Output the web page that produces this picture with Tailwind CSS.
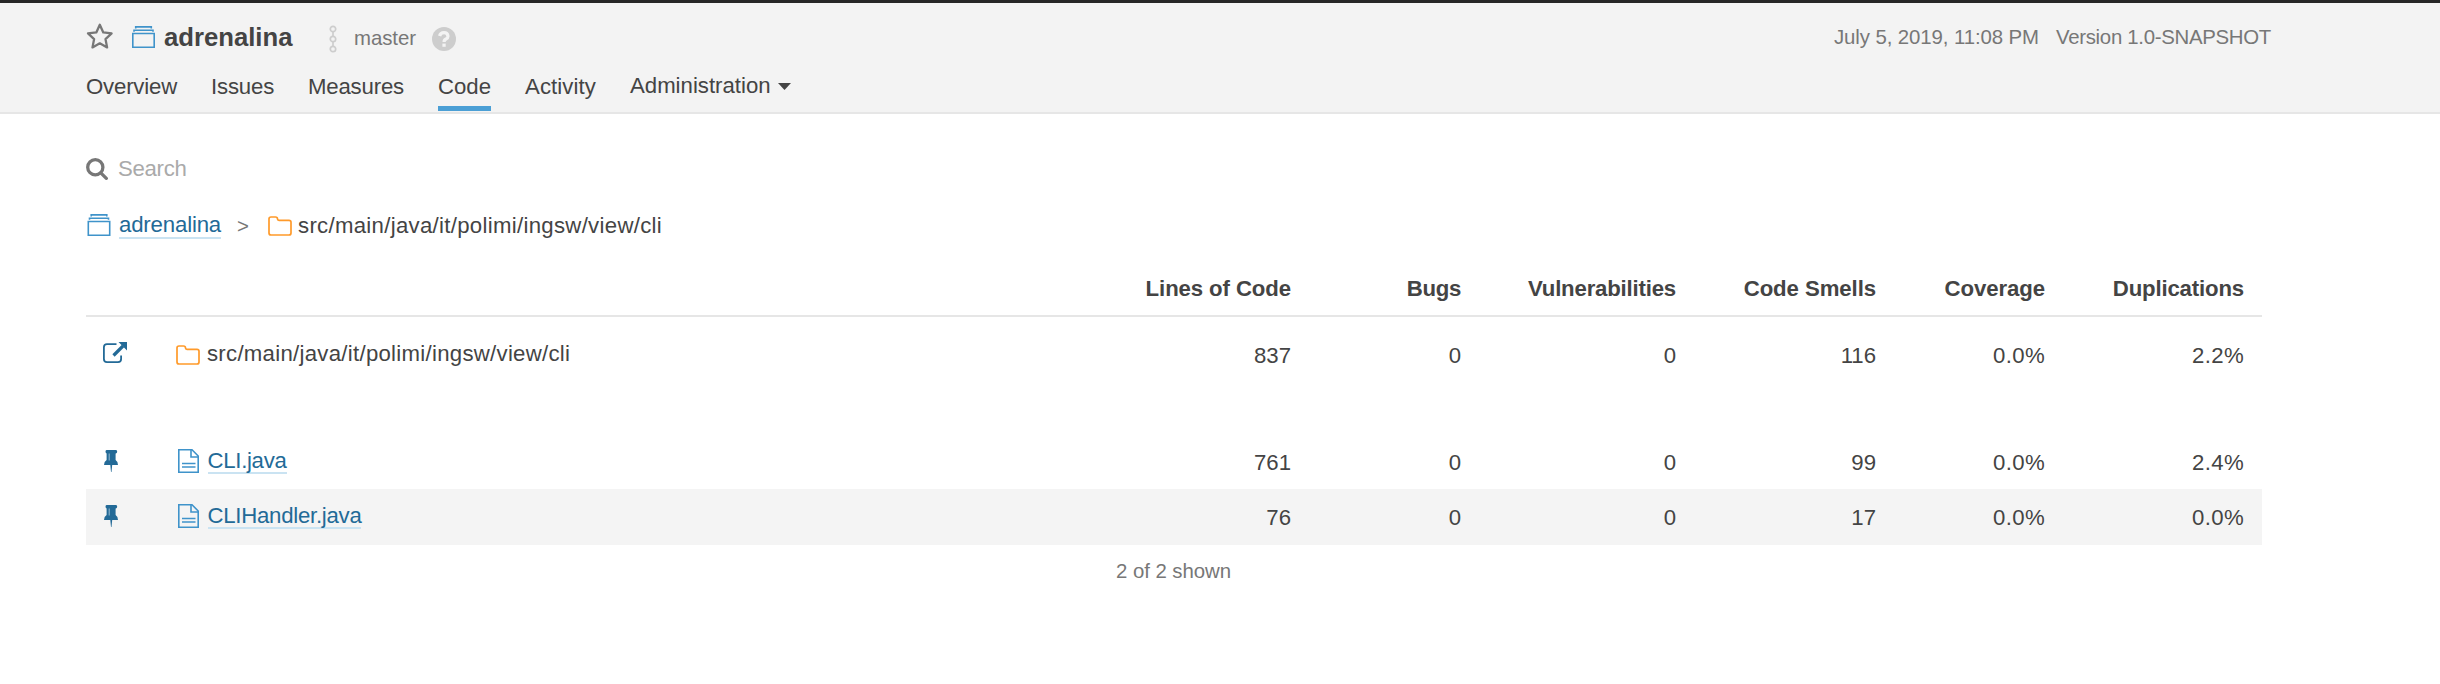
<!DOCTYPE html>
<html lang="en">
<head>
<meta charset="utf-8">
<title>adrenalina</title>
<script src="https://cdn.jsdelivr.net/npm/@tailwindcss/browser@4"></script>
</head>
<body class="min-h-[684px] bg-white font-['Liberation_Sans',Arial,sans-serif] text-[22.2px] leading-[24px] text-[#444]">
<svg class="hidden">
  <symbol id="project" viewBox="0 0 23 22"><g fill="none" stroke="#3f93ca" stroke-width="1.600"><path d="M.8 7.500h21.400v13.700H.8z"/><path d="M2 5.700V4.200h19v1.500M3.700 2.500V.9h15.600v1.600"/></g></symbol>
  <symbol id="folder" viewBox="0 0 24 20"><path d="M1 3Q1 1 3 1H7.500Q9.500 1 9.500 3 9.500 4.300 11 4.300H21Q23 4.300 23 6.300V17Q23 19 21 19H3Q1 19 1 17Z" fill="none" stroke="#ff9a2a" stroke-width="1.700"/></symbol>
  <symbol id="file" viewBox="0 0 21 24"><g fill="none" stroke="#3f93ca" stroke-width="1.600"><path d="M.8.8H14L20.200 7V23.200H.8Z"/><path d="M13 .8V8H20.200M4 14.500H17.500M4 18H17.500"/></g></symbol>
  <symbol id="pin" viewBox="0 0 14 22"><path d="M2.500 0H12Q13.200 .3 13.200 1.700T12 3.400H11.600V10Q14 11.500 14 15H8.200L7.500 22H7L6.300 15H0Q0 11.500 2.600 10V3.400Q1.500 3 1.500 1.700T2.500 0Z" fill="#236a97"/><path d="M5.200 3.600V10.500" stroke="#8db4cc" stroke-width="1.100"/></symbol>
</svg>
<header class="h-[114px] border-t-3 border-b-2 border-t-[#262626] border-b-[#e6e6e6] bg-[#f3f3f3] pl-[86px]">
  <div class="flex h-[67px] items-center pr-[169px]">
    <svg class="h-[27px] w-[28px]" viewBox="0 0 28 27"><path d="M13.800 1.800l3.500 7.600 8.300 1-6.100 5.700 1.600 8.300-7.300-4.100-7.300 4.100 1.600-8.300L2 10.400l8.300-1z" fill="none" stroke="#777" stroke-width="2.300" stroke-linejoin="round"/></svg>
    <svg class="ml-[18px] h-[22px] w-[23px]"><use href="#project"/></svg>
    <h1 class="ml-[9px] w-[165px] text-[25.7px] font-bold">adrenalina</h1>
    <svg class="mt-[4px] h-[28px] w-[8px]" viewBox="0 0 8 28"><g fill="none" stroke="#cdcdcd" stroke-width="1.700"><circle cx="4" cy="4" r="2.700"/><circle cx="4" cy="14" r="2.700"/><circle cx="4" cy="24" r="2.700"/><path d="M4 6.700v4.600M4 16.700v4.600"/></g></svg>
    <span class="mt-[2px] ml-[17px] w-[78px] text-[20.4px] tracking-[-0.05px] text-[#777]">master</span>
    <svg class="mt-[4px] h-[24px] w-[24px]" viewBox="0 0 24 24"><circle cx="12" cy="12" r="12" fill="#cdcdcd"/><path d="M7.600 9Q8.400 5.700 12 5.700T16 9.200Q16 11 14 12T12.100 15" fill="none" stroke="#f3f3f3" stroke-width="3.200"/><path d="M10.400 16.600h3.300v3.200h-3.300z" fill="#f3f3f3"/></svg>
    <div class="ml-auto flex gap-[17px] text-[20.4px] text-[#777]"><span class="tracking-[-0.09px]">July 5, 2019, 11:08 PM</span><span class="tracking-[-0.3px]">Version 1.0-SNAPSHOT</span></div>
  </div>
  <nav class="flex h-[41px] leading-[33px]">
    <a class="w-[125px] tracking-[-0.18px]">Overview</a>
    <a class="w-[97px] tracking-[-0.18px]">Issues</a>
    <a class="w-[130px] tracking-[-0.18px]">Measures</a>
    <a class="mr-[34px] w-[53px] border-b-5 border-[#4b9fd5]">Code</a>
    <a class="w-[105px] tracking-[0.09px]">Activity</a>
    <a class="flex leading-[31px]">Administration<svg class="mt-[13px] ml-[7px] h-[7px] w-[13px]" viewBox="0 0 13 7"><path d="M0 0h13L6.500 7z" fill="#444"/></svg></a>
  </nav>
</header>
<main class="ml-[86px] w-[2176px] pt-[40px]">
  <div class="flex h-[30px] items-center text-[#aaa]">
    <svg class="h-[22px] w-[22px]" viewBox="0 0 22 22"><g fill="none" stroke="#777" stroke-width="3.300"><circle cx="9.300" cy="9.300" r="7.600"/><path d="M14.800 14.800l5.500 5.500" stroke-linecap="round"/></g></svg>
    <span class="ml-[10px] tracking-[-0.3px]">Search</span>
  </div>
  <div class="mt-[26px] flex h-[30px] items-center">
    <svg class="ml-[1px] h-[22px] w-[24px]"><use href="#project"/></svg>
    <a class="mt-[2px] ml-[8px] w-[102px] border-b-2 border-[#cae3f2] tracking-[-0.16px] text-[#236a97]">adrenalina</a>
    <span class="mt-[2px] ml-[16px] w-[31px] text-[20.4px] text-[#777]">&gt;</span>
    <svg class="mt-[2px] h-[20px] w-[24px]"><use href="#folder"/></svg>
    <span class="mt-[2px] ml-[6px] tracking-[0.3px]">src/main/java/it/polimi/ingsw/view/cli</span>
  </div>
  <section class="mt-[21px]">
    <div class="grid h-[56px] grid-cols-[92px_900px_213px_170px_215px_200px_169px_199px] items-center border-b-2 border-[#e6e6e6] pt-[2px] text-right font-bold">
      <span class="col-start-3 tracking-[-0.1px]">Lines of Code</span><span class="tracking-[-0.3px]">Bugs</span><span class="tracking-[-0.19px]">Vulnerabilities</span><span class="tracking-[-0.08px]">Code Smells</span><span class="tracking-[-0.08px]">Coverage</span><span class="tracking-[-0.16px]">Duplications</span>
    </div>
    <div class="mb-[44px] grid h-[73px] grid-cols-[92px_900px_213px_170px_215px_200px_169px_199px] items-center text-right">
      <svg class="mb-[1px] ml-[17px] h-[22px] w-[24px]" viewBox="0 0 24 22"><g fill="none" stroke="#236a97"><path d="M13.500 2.200H4Q.9 2.200 .9 5.300V17Q.9 20.100 4 20.100H15Q18.100 20.100 18.100 17V13.500" stroke-width="1.800"/><path d="M10.500 13.500L20 4" stroke-width="3.200"/></g><path d="M15.500 0H24V8.500z" fill="#236a97"/></svg>
      <div class="flex items-center text-left"><svg class="mt-[2px] -ml-[2px] h-[20px] w-[24px]"><use href="#folder"/></svg><span class="ml-[7px] tracking-[0.28px]">src/main/java/it/polimi/ingsw/view/cli</span></div>
      <span class="pt-[4px]">837</span><span class="pt-[4px]">0</span><span class="pt-[4px]">0</span><span class="pt-[4px]">116</span><span class="pt-[4px] tracking-[0.36px]">0.0%</span><span class="pt-[4px] tracking-[0.36px]">2.2%</span>
    </div>
    <div class="grid h-[55px] grid-cols-[92px_900px_213px_170px_215px_200px_169px_199px] items-center text-right">
      <svg class="mb-[2px] ml-[18px] h-[22px] w-[14px]"><use href="#pin"/></svg>
      <div class="flex items-center text-left"><svg class="mb-[1px] h-[24px] w-[21px]"><use href="#file"/></svg><a class="ml-[8.5px] border-b-2 border-[#cae3f2] leading-[23px] tracking-[-0.3px] text-[#236a97]">CLI.java</a></div>
      <span class="pt-[2px]">761</span><span class="pt-[2px]">0</span><span class="pt-[2px]">0</span><span class="pt-[2px]">99</span><span class="pt-[2px] tracking-[0.36px]">0.0%</span><span class="pt-[2px] tracking-[0.36px]">2.4%</span>
    </div>
    <div class="grid h-[56px] grid-cols-[92px_900px_213px_170px_215px_200px_169px_199px] items-center bg-[#f4f4f4] text-right">
      <svg class="mb-[2px] ml-[18px] h-[22px] w-[14px]"><use href="#pin"/></svg>
      <div class="flex items-center pb-[1px] text-left"><svg class="mb-[1px] h-[24px] w-[21px]"><use href="#file"/></svg><a class="ml-[8.5px] border-b-2 border-[#cae3f2] leading-[23px] tracking-[-0.26px] text-[#236a97]">CLIHandler.java</a></div>
      <span class="pt-[2px]">76</span><span class="pt-[2px]">0</span><span class="pt-[2px]">0</span><span class="pt-[2px]">17</span><span class="pt-[2px] tracking-[0.36px]">0.0%</span><span class="pt-[2px] tracking-[0.36px]">0.0%</span>
    </div>
    <div class="flex h-[52px] items-center justify-center pr-[1px] text-[20.4px] tracking-[-0.05px] text-[#777]">2 of 2 shown</div>
  </section>
</main>
</body>
</html>
